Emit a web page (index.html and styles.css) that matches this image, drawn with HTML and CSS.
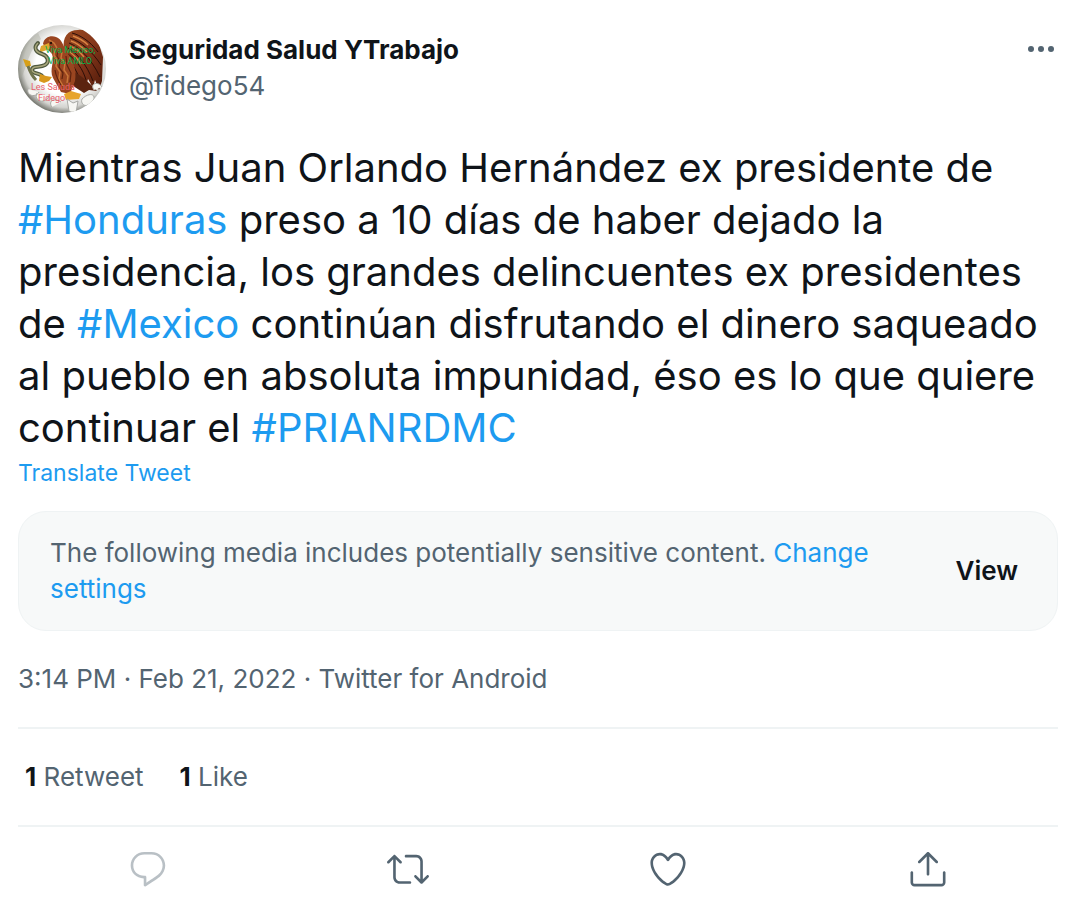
FILE: index.html
```html
<!DOCTYPE html>
<html lang="en">
<head>
  <meta charset="UTF-8" />
  <title>Seguridad Salud YTrabajo on Twitter</title>
  <meta name="viewport" content="width=device-width, initial-scale=1.0" />
  <link rel="stylesheet" href="styles.css">
</head>
<body>
  <article class="tweet">
    <header class="tweet-header">
      <svg class="avatar" viewBox="0 0 88 88" role="img" aria-label="Profile photo">
        <defs>
          <radialGradient id="disc" cx="54%" cy="46%" r="56%">
            <stop offset="0.6" stop-color="#ffffff" />
            <stop offset="0.85" stop-color="#d4d4d0" />
            <stop offset="1" stop-color="#6c6e66" />
          </radialGradient>
          <linearGradient id="wing" x1="0" y1="0" x2="1" y2="1">
            <stop offset="0" stop-color="#9a4a20" />
            <stop offset="0.5" stop-color="#84361a" />
            <stop offset="1" stop-color="#4f1a0a" />
          </linearGradient>
          <clipPath id="round"><circle cx="44" cy="44" r="44" /></clipPath>
        </defs>
        <g clip-path="url(#round)">
          <rect width="88" height="88" fill="url(#disc)" />
          <path d="M0 58V25L20 8l3 6C8 28 10 44 0 58z" fill="#a5a79b" opacity="0.4" />
          <!-- eagle -->
          <path d="M46 24C44 12 50 5 60 5c10-1 17 4 20 11l5 16-1 24-3 9-4-10-2 8-5-9-2 8-5-7-4 6-5-8z" fill="url(#wing)" />
          <path d="M54 8c8 2 18 8 26 19M52 13c10 3 22 13 31 27M51 18c10 4 22 15 31 34M50 23c9 5 19 17 25 33M50 29c8 6 15 15 18 26M50 35c5 5 9 11 11 18" fill="none" stroke="#2c0f08" stroke-width="1" />
          <path d="M55 11c6 2 11 5 15 9M53 16c6 2 12 7 16 11M52 21c5 2 10 6 14 11M52 27c4 3 8 7 11 12" fill="none" stroke="#d98543" stroke-width="1.5" />
          <path d="M52 45c10 4 20 13 27 21l-8-1-5 3-14-9z" fill="#5b2410" />
          <path d="M25 19c1-7 8-9 13-7 6 2 7 9 11 15 6 9 10 18 8 29l-5 13-9-2-8-14c-4-9 2-16-1-24z" fill="#9a4520" />
          <path d="M37 24l-1 6 3 5-1 6 4 6-1 7 4 7M44 27l-1 6 4 5-1 7 4 6-1 7M31 15l5 3 3 5" fill="none" stroke="#c97638" stroke-width="1.5" />
          <path d="M40 26l-1 5 3 5-1 6 4 6-1 6M37 45c1 7 4 12 7 17M48 31l1 9 4 8-1 9" fill="none" stroke="#5d230e" stroke-width="1.2" />
          <path d="M31 18l-8 3-2 7 5-2 6-2z" fill="#dfa72e" />
          <circle cx="33" cy="18" r="1.2" fill="#291108" />
          <!-- snake -->
          <path d="M20 18c-5 5-2 9 4 11s8 8 3 11-13 0-13 5 10 2 11 8" fill="none" stroke="#515a40" stroke-width="4" stroke-linecap="round" />
          <path d="M20 18c-5 5-2 9 4 11s8 8 3 11-13 0-13 5 10 2 11 8" fill="none" stroke="#a9a77c" stroke-width="1.5" />
          <path d="M5 34l7 2 1 5-5 1z" fill="#d8a018" />
          <path d="M10 41c2 6 4 10 8 14" fill="none" stroke="#70734d" stroke-width="3" />
          <path d="M22 49l6 2 6 1-3 4-5 2-5-2z" fill="#d8981c" />
          <!-- cactus and flowers -->
          <path d="M46 69l7-3 10 3-2 5-13 1z" fill="#e7a52c" />
          <path d="M10 64c-2 7 8 9 11 3M19 68c-4 8 8 12 12 3M43 77c-8-5-13 0-9 5M51 86l-2-12 6 4 5-2-2 12M64 74c8-8 16-4 10 3s-12 2-10-3M76 65c-5-7 5-9 8-3" fill="#f7f7f3" stroke="#a8a9a5" stroke-width="1" />
          <g class="avatar-text">
            <text x="27" y="28" fill="#08b04c">Viva México,</text>
            <text x="30" y="39" fill="#08b04c">Viva AMLO</text>
            <text x="13" y="65" fill="#e8606c">Les Saluda</text>
            <text x="20" y="76" fill="#e8606c">Fidego</text>
          </g>
        </g>
      </svg>
      <div class="author">
        <a class="name" href="#">Seguridad Salud YTrabajo</a>
        <a class="handle" href="#">@fidego54</a>
      </div>
      <button class="icon-button more" type="button" aria-label="More">
        <svg viewBox="0 0 34 34"><circle cx="7" cy="17" r="3" /><circle cx="17" cy="17" r="3" /><circle cx="27" cy="17" r="3" /></svg>
      </button>
    </header>

    <p class="tweet-text" lang="es">Mientras Juan Orlando Hernández ex presidente de <a href="#">#Honduras</a> preso a 10 días de haber dejado la presidencia, los grandes delincuentes ex presidentes de <a href="#">#Mexico</a> continúan disfrutando el dinero saqueado al pueblo en absoluta impunidad, éso es lo que quiere continuar el <a href="#">#PRIANRDMC</a></p>
    <button class="translate" type="button">Translate Tweet</button>

    <section class="warning">
      <p>The following media includes potentially sensitive content. <a href="#">Change settings</a></p>
      <button class="view" type="button">View</button>
    </section>

    <p class="meta"><a href="#">3:14 PM · Feb 21, 2022</a> · <a href="#">Twitter for Android</a></p>

    <div class="stats">
      <a href="#"><strong>1</strong> Retweet</a>
      <a href="#"><strong>1</strong> Like</a>
    </div>

    <div class="actions">
      <button class="icon-button" type="button" aria-label="Reply" disabled>
        <svg viewBox="0 0 24 24"><path d="M14.046 2.242l-4.148-.01h-.002c-4.374 0-7.8 3.427-7.8 7.802 0 4.098 3.186 7.206 7.465 7.37v3.828c0 .108.044.286.12.403.142.225.384.347.632.347.138 0 .277-.038.402-.118.264-.168 6.473-4.14 8.088-5.506 1.902-1.61 3.04-3.97 3.043-6.312v-.017c-.006-4.367-3.43-7.787-7.8-7.788zm3.787 12.972c-1.134.96-4.862 3.405-6.772 4.643V16.67c0-.414-.335-.75-.75-.75h-.396c-3.66 0-6.318-2.476-6.318-5.886 0-3.534 2.768-6.302 6.3-6.302l4.147.01h.002c3.532 0 6.3 2.766 6.302 6.296-.003 1.91-.942 3.844-2.514 5.176z" /></svg>
      </button>
      <button class="icon-button" type="button" aria-label="Retweet">
        <svg viewBox="0 0 24 24"><path d="M23.77 15.67c-.292-.293-.767-.293-1.06 0l-2.22 2.22V7.65c0-2.068-1.683-3.75-3.75-3.75h-5.85c-.414 0-.75.336-.75.75s.336.75.75.75h5.85c1.24 0 2.25 1.01 2.25 2.25v10.24l-2.22-2.22c-.293-.293-.768-.293-1.06 0s-.294.768 0 1.06l3.5 3.5c.145.147.337.22.53.22s.383-.072.53-.22l3.5-3.5c.294-.292.294-.767 0-1.06zm-10.66 3.28H7.26c-1.24 0-2.25-1.01-2.25-2.25V6.46l2.22 2.22c.148.147.34.22.532.22s.384-.073.53-.22c.293-.293.293-.768 0-1.06l-3.5-3.5c-.293-.294-.768-.294-1.06 0l-3.5 3.5c-.294.292-.294.767 0 1.06s.767.293 1.06 0l2.22-2.22V16.7c0 2.068 1.683 3.75 3.75 3.75h5.85c.414 0 .75-.336.75-.75s-.337-.75-.75-.75z" /></svg>
      </button>
      <button class="icon-button" type="button" aria-label="Like">
        <svg viewBox="0 0 24 24"><path d="M12 21.638h-.014C9.403 21.59 1.95 14.856 1.95 8.478c0-3.064 2.525-5.754 5.403-5.754 2.29 0 3.83 1.58 4.646 2.73.814-1.148 2.354-2.73 4.645-2.73 2.88 0 5.404 2.69 5.404 5.755 0 6.376-7.454 13.11-10.037 13.157H12zM7.354 4.225c-2.08 0-3.903 1.988-3.903 4.255 0 5.74 7.034 11.596 8.55 11.658 1.518-.062 8.55-5.917 8.55-11.658 0-2.267-1.823-4.255-3.903-4.255-2.528 0-3.94 2.936-3.952 2.965-.23.562-1.156.562-1.387 0-.014-.03-1.425-2.965-3.954-2.965z" /></svg>
      </button>
      <button class="icon-button" type="button" aria-label="Share">
        <svg viewBox="0 0 24 24"><path d="M17.53 7.47l-5-5c-.293-.293-.768-.293-1.06 0l-5 5c-.294.293-.294.768 0 1.06s.767.294 1.06 0l3.72-3.72V15c0 .414.336.75.75.75s.75-.336.75-.75V4.81l3.72 3.72c.146.147.338.22.53.22s.384-.072.53-.22c.293-.293.293-.767 0-1.06z" /><path d="M19.708 21.944H4.292C3.028 21.944 2 20.916 2 19.652V14c0-.414.336-.75.75-.75s.75.336.75.75v5.652c0 .437.355.792.792.792h15.416c.437 0 .792-.355.792-.792V14c0-.414.336-.75.75-.75s.75.336.75.75v5.652c0 1.264-1.028 2.292-2.292 2.292z" /></svg>
      </button>
    </div>
  </article>
</body>
</html>
```
FILE: styles.css
```css
body {
  margin: 0;
  background-color: #fff;
  color: #0f1419;
  font-family: Inter, "Liberation Sans", sans-serif;
  font-size: 26px;
  line-height: 36px;
}

p {
  margin: 0;
}

a {
  color: #1d9bf0;
  text-decoration: none;
}

a:hover {
  text-decoration: underline;
}

button {
  padding: 0;
  border: none;
  background: none;
  color: inherit;
  font: inherit;
  cursor: pointer;
}

.tweet {
  padding: 25px 22px 12px 18px;
}

.tweet-header {
  display: flex;
  gap: 23px;
}

.avatar {
  width: 88px;
  height: 88px;
  flex-shrink: 0;
}

.avatar-text {
  font-family: Roboto, sans-serif;
  font-size: 9px;
}

.author {
  display: flex;
  flex-direction: column;
  flex: 1;
  padding-top: 7px;
}

.author .name {
  color: #0f1419;
  font-weight: 700;
}

.author .handle {
  color: #536471;
}

.icon-button {
  display: flex;
  color: #536471;
}

.icon-button svg {
  width: 42px;
  height: 42px;
  fill: currentColor;
}

.icon-button:disabled {
  opacity: 0.4;
  cursor: default;
}

.more {
  align-self: flex-start;
  padding-top: 7px;
}

.more svg {
  width: 34px;
  height: 34px;
}

.tweet-text {
  margin-top: 29px;
  font-size: 40px;
  line-height: 52px;
}

.translate {
  display: block;
  margin-top: 1px;
  color: #1d9bf0;
  font-size: 23px;
}

.warning {
  display: flex;
  align-items: center;
  justify-content: space-between;
  gap: 60px;
  margin-top: 20px;
  padding: 23px 39px 23px 31px;
  border: 1px solid #eff3f4;
  border-radius: 28px;
  background-color: #f7f9f9;
  color: #536471;
}

.view {
  color: #0f1419;
  font-weight: 600;
}

.meta,
.meta a {
  color: #536471;
}

.meta {
  padding: 30px 0;
}

.stats {
  display: flex;
  gap: 36px;
  padding: 30px 7px;
  border-top: 2px solid #eff3f4;
  border-bottom: 2px solid #eff3f4;
}

.stats a {
  color: #536471;
}

.stats strong {
  color: #0f1419;
}

.actions {
  display: grid;
  grid-template-columns: repeat(4, 1fr);
  justify-items: center;
  padding-top: 21px;
}
```
